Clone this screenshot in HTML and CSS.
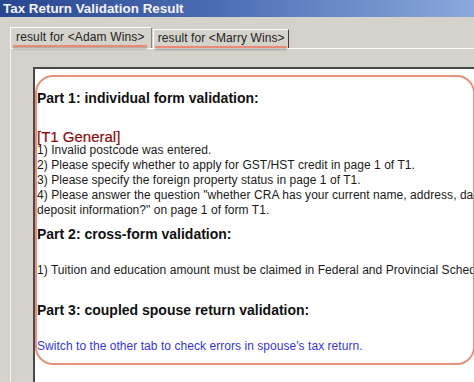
FILE: index.html
```html
<!DOCTYPE html>
<html lang="en">
  <head>
    <meta charset="UTF-8" />
    <meta name="viewport" content="width=device-width, initial-scale=1.0" />
    <link rel="stylesheet" href="styles.css">
    <title>Tax Return Validation Result</title>
  </head>
  <body>
    <div class="window">
      <div class="titlebar">Tax Return Validation Result</div>
      <div class="tabs">
        <div class="tab active"><span class="mark">result for &lt;Adam Wins&gt;</span></div>
        <div class="tab"><span class="mark">result for &lt;Marry Wins&gt;</span></div>
      </div>
      <div class="panel">
        <div class="sheet">
          <div class="callout">
            <h2 class="part first">Part 1: individual form validation:</h2>
            <h3 class="form-name">[T1 General]</h3>
            <div class="item">1) Invalid postcode was entered.</div>
            <div class="item">2) Please specify whether to apply for GST/HST credit in page 1 of T1.</div>
            <div class="item">3) Please specify the foreign property status in page 1 of T1.</div>
            <div class="item">4) Please answer the question "whether CRA has your current name, address, date of birth and direct</div>
            <div class="item">deposit information?" on page 1 of form T1.</div>
            <h2 class="part">Part 2: cross-form validation:</h2>
            <div class="item gap">1) Tuition and education amount must be claimed in Federal and Provincial Schedules.</div>
            <h2 class="part">Part 3: coupled spouse return validation:</h2>
            <div class="item gap note">Switch to the other tab to check errors in spouse's tax return.</div>
          </div>
        </div>
      </div>
    </div>
  </body>
</html>
```

FILE: styles.css
```css
* {
  margin: 0;
  padding: 0;
  box-sizing: border-box;
}

body {
  width: 474px;
  height: 382px;
  overflow: hidden;
  font-family: "Liberation Sans", Arial, sans-serif;
  background-color: #d5d2cc;
}

.window {
  height: 382px;
  overflow: hidden;
}

.titlebar {
  height: 17px;
  padding-left: 3px;
  line-height: 17px;
  font-size: 13.4px;
  font-weight: bold;
  color: #f4f4f8;
  background: linear-gradient(to right, #28468f 0%, #4b6cb3 45%, #8aa9dc 100%);
}

.tabs {
  display: flex;
  align-items: flex-end;
  height: 31px;
  padding-left: 10px;
}

.tab {
  height: 19px;
  padding: 0 3px 0 4px;
  font-size: 12px;
  letter-spacing: 0.1px;
  line-height: 17px;
  color: #222;
  border-top: 1px solid #fbfbfb;
  border-left: 1px solid #fbfbfb;
  border-right: 1px solid #404040;
}

.tab.active {
  height: 21px;
  padding: 1px 6px 0 5px;
  margin-right: 1px;
  letter-spacing: 0.15px;
  border-right: 1px solid #8a8780;
}

.mark {
  display: inline-block;
  position: relative;
  line-height: 17px;
}

/* red annotation stroke under each tab label */
.mark::after {
  content: "";
  position: absolute;
  left: -3px;
  right: -2px;
  bottom: -1px;
  height: 2px;
  background-color: #ea8a74;
  box-shadow: 0 2px 2px rgba(90, 90, 90, 0.45);
}

.panel {
  margin-left: 10px;
  padding: 18px 0 0 22px;
  height: 334px;
  border-top: 1px solid #fbfbfb;
  border-left: 1px solid #f4f3f0;
}

.sheet {
  height: 320px;
  width: 460px;
  padding-top: 6px;
  background-color: #fff;
  border-top: 2px solid #4a4a4a;
  border-left: 2px solid #4a4a4a;
}

.callout {
  width: 440px;
  height: 290px;
  padding: 13px 0 0 0;
  border: 2px solid #e9907c;
  border-radius: 18px;
  white-space: nowrap;
  overflow: hidden;
}

.part {
  font-size: 14px;
  font-weight: bold;
  line-height: 16px;
  color: #111;
  margin-top: 8px;
}

.part.first {
  margin-top: 0;
}

.form-name {
  margin-top: 24px;
  font-size: 15px;
  font-weight: normal;
  line-height: 13px;
  color: #8b0a0a;
  -webkit-text-stroke: 0.2px #8b0a0a;
}

.item {
  font-size: 12px;
  letter-spacing: 0.05px;
  line-height: 15px;
  color: #1a1a1a;
}

.item.gap {
  margin-top: 20px;
}

.part + .item.gap {
  margin-top: 21px;
}

.item + .part {
  margin-top: 24px;
}

.item:nth-child(7) + .part {
  margin-top: 8px;
}

.note {
  color: #3535d8;
}
```
